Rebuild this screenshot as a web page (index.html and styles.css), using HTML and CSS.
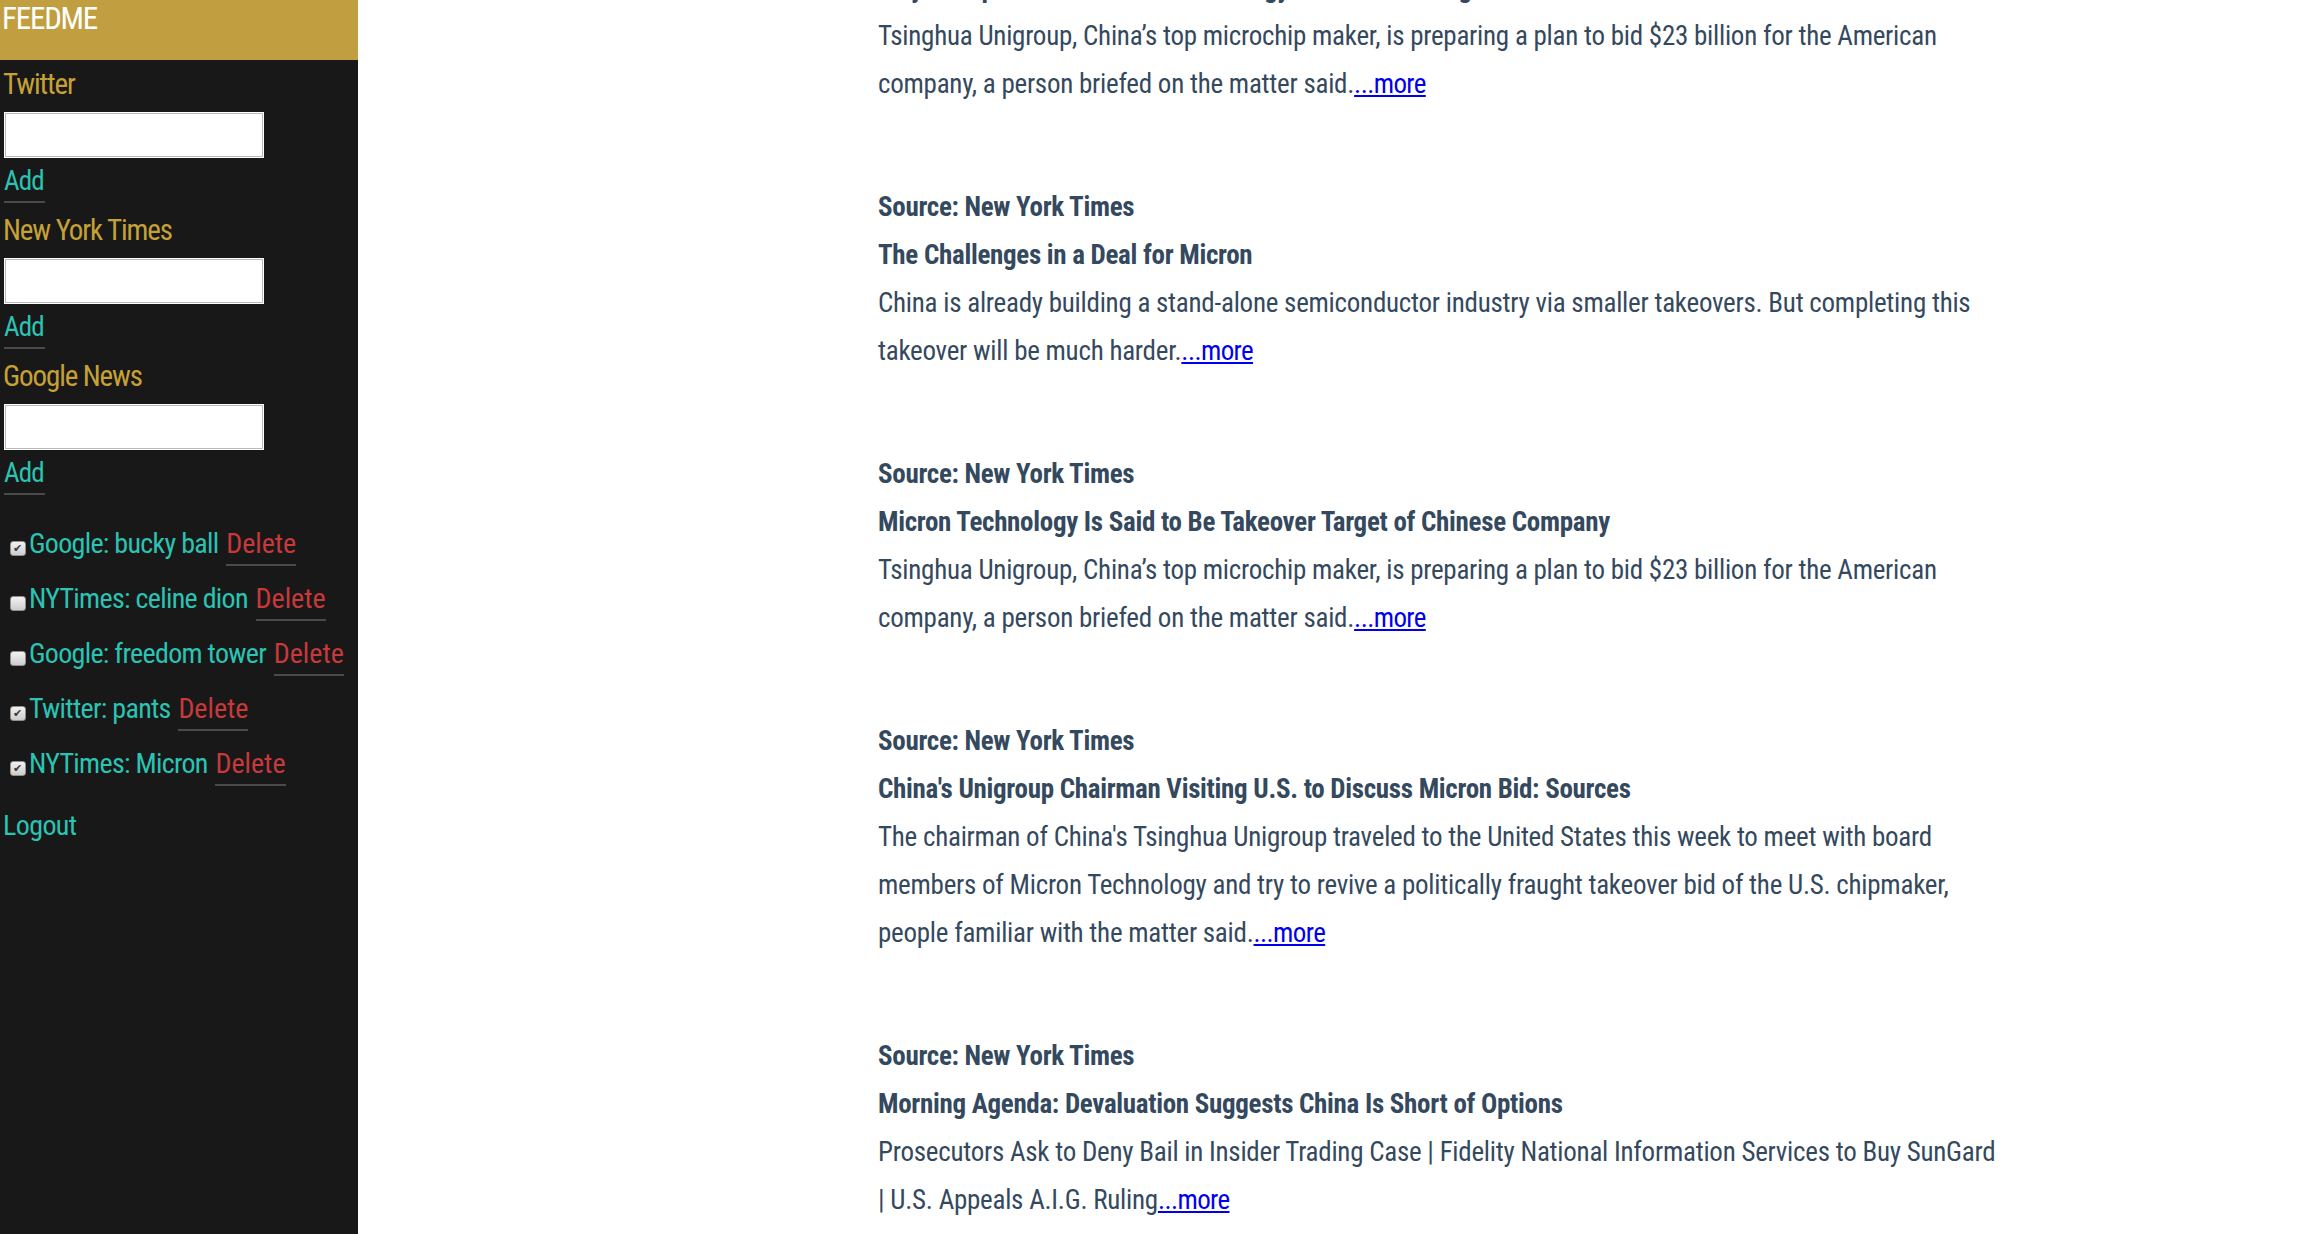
FILE: index.html
```html
<!DOCTYPE html>
<html lang="en">
<head>
<meta charset="utf-8">
<title>FEEDME</title>
<link rel="stylesheet" href="styles.css">
</head>
<body>
<div class="page">
  <aside class="sidebar">
    <div class="brand">FEEDME</div>
    <div class="source-forms">
      <section class="source-form">
        <div class="source-label">Twitter</div>
        <input class="source-input" type="text">
        <a class="add-link" href="#">Add</a>
      </section>
      <section class="source-form">
        <div class="source-label">New York Times</div>
        <input class="source-input" type="text">
        <a class="add-link" href="#">Add</a>
      </section>
      <section class="source-form">
        <div class="source-label">Google News</div>
        <input class="source-input" type="text">
        <a class="add-link" href="#">Add</a>
      </section>
    </div>
    <ul class="subs">
      <li class="sub"><span class="check is-checked"></span>Google: bucky ball <a class="delete-link" href="#">Delete</a></li>
      <li class="sub"><span class="check"></span>NYTimes: celine dion <a class="delete-link" href="#">Delete</a></li>
      <li class="sub"><span class="check"></span>Google: freedom tower <a class="delete-link" href="#">Delete</a></li>
      <li class="sub"><span class="check is-checked"></span>Twitter: pants <a class="delete-link" href="#">Delete</a></li>
      <li class="sub"><span class="check is-checked"></span>NYTimes: Micron <a class="delete-link" href="#">Delete</a></li>
    </ul>
    <a class="logout" href="#">Logout</a>
  </aside>
  <main class="feed">
    <div class="feed-list">
      <article class="item">
        <div class="item-source">Source: New York Times</div>
        <div class="item-title">Why a Chip Deal for Micron Technology Worries Washington Leaders</div>
        <div class="item-desc">Tsinghua Unigroup, China’s top microchip maker, is preparing a plan to bid $23 billion for the American<br>company, a person briefed on the matter said.<a class="more" href="#">...more</a></div>
      </article>
      <article class="item">
        <div class="item-source">Source: New York Times</div>
        <div class="item-title">The Challenges in a Deal for Micron</div>
        <div class="item-desc">China is already building a stand-alone semiconductor industry via smaller takeovers. But completing this<br>takeover will be much harder.<a class="more" href="#">...more</a></div>
      </article>
      <article class="item">
        <div class="item-source">Source: New York Times</div>
        <div class="item-title">Micron Technology Is Said to Be Takeover Target of Chinese Company</div>
        <div class="item-desc">Tsinghua Unigroup, China’s top microchip maker, is preparing a plan to bid $23 billion for the American<br>company, a person briefed on the matter said.<a class="more" href="#">...more</a></div>
      </article>
      <article class="item">
        <div class="item-source">Source: New York Times</div>
        <div class="item-title">China's Unigroup Chairman Visiting U.S. to Discuss Micron Bid: Sources</div>
        <div class="item-desc">The chairman of China's Tsinghua Unigroup traveled to the United States this week to meet with board<br>members of Micron Technology and try to revive a politically fraught takeover bid of the U.S. chipmaker,<br>people familiar with the matter said.<a class="more" href="#">...more</a></div>
      </article>
      <article class="item">
        <div class="item-source">Source: New York Times</div>
        <div class="item-title">Morning Agenda: Devaluation Suggests China Is Short of Options</div>
        <div class="item-desc">Prosecutors Ask to Deny Bail in Insider Trading Case | Fidelity National Information Services to Buy SunGard<br>| U.S. Appeals A.I.G. Ruling<a class="more" href="#">...more</a></div>
      </article>
    </div>
  </main>
</div>
</body>
</html>
```

FILE: styles.css
```css
* { box-sizing: border-box; }

html, body {
  margin: 0;
  padding: 0;
  height: 100%;
  background: #ffffff;
}

body {
  font-family: "Roboto Condensed", "DejaVu Sans Condensed", sans-serif;
  overflow: hidden;
}

.page {
  display: grid;
  grid-template-columns: 358px 1fr;
  height: 100vh;
}

/* ---------- sidebar ---------- */
.sidebar {
  background: #181818;
  display: flex;
  flex-direction: column;
  align-items: flex-start;
  overflow: hidden;
}

.brand {
  align-self: stretch;
  height: 60px;
  background: #c19f40;
  color: #ffffff;
  font-size: 31px;
  line-height: 38px;
  padding-left: 2px;
  letter-spacing: -1.2px;
}

.source-forms {
  display: flex;
  flex-direction: column;
  gap: 7px;
  padding: 4px 0 0 3px;
}

.source-form {
  display: flex;
  flex-direction: column;
  align-items: flex-start;
}

.source-label {
  color: #c6a137;
  font-size: 29px;
  line-height: 40px;
  letter-spacing: -1.1px;
}

.source-input {
  width: 258px;
  height: 44px;
  margin: 9px 0 4px 2px;
  border: 1px solid #b9b9b9;
  box-shadow: 0 0 0 1px #ffffff;
  background: #ffffff;
  padding: 0;
}

.add-link {
  display: inline-block;
  color: #2bc4b4;
  font-size: 27px;
  line-height: 40px;
  letter-spacing: -0.8px;
  text-decoration: none;
  border-bottom: 2px solid #4a4a4a;
  margin-left: 1px;
  padding-right: 1px;
}

.subs {
  list-style: none;
  margin: 21px 0 0;
  padding: 0 0 0 10px;
}

.sub {
  color: #2bc4b4;
  font-size: 28px;
  line-height: 55px;
  height: 55px;
  letter-spacing: -0.7px;
  white-space: nowrap;
}

.check {
  display: inline-block;
  width: 16px;
  height: 15px;
  margin-right: 3px;
  vertical-align: -3px;
  border: 1px solid #8f8f8f;
  border-radius: 3px;
  background: linear-gradient(#f2f2f2, #cdcdcd);
  position: relative;
}

.check.is-checked::after {
  content: "✔";
  position: absolute;
  left: 2px;
  top: 0;
  font-family: "DejaVu Sans", sans-serif;
  font-size: 11px;
  line-height: 14px;
  letter-spacing: 0;
  color: #3a3a3a;
}

.delete-link {
  display: inline-block;
  color: #c8393b;
  font-size: 28px;
  line-height: 40px;
  letter-spacing: 0;
  text-decoration: none;
  border-bottom: 2px solid #4a4a4a;
  margin-left: 2px;
}

.logout {
  color: #2bc4b4;
  font-size: 28px;
  line-height: 40px;
  letter-spacing: -0.6px;
  margin: 15px 0 0 3px;
  text-decoration: none;
}

/* ---------- feed ---------- */
.feed {
  overflow: hidden;
  padding-left: 520px;
}

.feed-list {
  margin-top: -84px;
  display: flex;
  flex-direction: column;
  gap: 75px;
}

.item {
  color: #34495e;
  font-size: 27px;
  line-height: 48px;
}

.item-source,
.item-title {
  font-weight: 700;
  letter-spacing: -0.3px;
  white-space: nowrap;
}

.item-desc {
  letter-spacing: -0.25px;
  white-space: nowrap;
}

.more {
  color: #0000ee;
  text-decoration: underline;
  letter-spacing: -0.6px;
}
```
